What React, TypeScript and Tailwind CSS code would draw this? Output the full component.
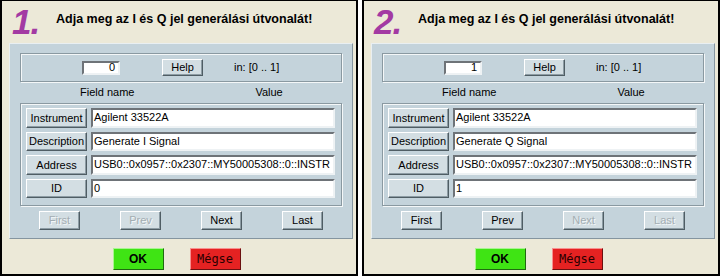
import React from "react";

interface PanelProps {
  num: string;
  index: string;
  desc: string;
  atFirst: boolean;
}

const fields = ["Instrument", "Description", "Address", "ID"];

const raised =
  "border border-t-white border-l-white border-b-[#4f5d64] border-r-[#4f5d64] shadow-[inset_-1px_-1px_0_#8d9ca4]";
const sunken =
  "border-2 border-t-[#6e7378] border-l-[#6e7378] border-b-[#eef2f4] border-r-[#eef2f4] bg-white";
const etched = "border border-[#8a99a1] shadow-[1px_1px_0_#f4f7f8,inset_1px_1px_0_#f4f7f8]";

const NavButton: React.FC<{ label: string; disabled: boolean }> = ({ label, disabled }) => (
  <div
    className={`w-[41px] h-[19px] flex items-center justify-center bg-[#d3dee3] ${raised} ${
      disabled ? "text-[#a3adb2] [text-shadow:1px_1px_0_#f4f7f8]" : "text-black"
    }`}
  >
    {label}
  </div>
);

const Panel: React.FC<PanelProps> = ({ num, index, desc, atFirst }) => {
  const values = ["Agilent 33522A", desc, "USB0::0x0957::0x2307::MY50005308::0::INSTR", index];

  return (
    <div className="w-[358px] h-[276px] bg-[#ece9d8] border-2 border-t border-black flex flex-col">
      {/* fejléc */}
      <div className="h-[42px] flex items-start pl-[10px]">
        <span className="text-[35px] leading-[36px] font-bold italic text-[#a33aa3] mt-[3px] w-[43px] tracking-[-1px]">
          {num}
        </span>
        <span className="text-[12.5px] font-bold text-black mt-[9px] ml-[1px]">
          Adja meg az I és Q jel generálási útvonalát!
        </span>
      </div>

      {/* kék panel */}
      <div className="ml-[7px] mr-[3px] h-[196px] bg-[#c4d3db] border border-t-[#e9eff2] border-l-[#e9eff2] border-b-[#8595a0] border-r-[#8595a0] flex flex-col px-[10px] pt-[9px]">
        <div className={`h-[29px] flex items-center ${etched}`}>
          <div className={`ml-[61px] w-[38px] h-[14px] ${sunken} flex items-center justify-end pr-[3px] leading-none`}>
            {index}
          </div>
          <div className={`ml-[42px] w-[41px] h-[17px] flex items-center justify-center bg-[#d3dee3] ${raised}`}>
            Help
          </div>
          <span className="ml-[31px]">in: [0 .. 1]</span>
        </div>

        <div className="h-[21px] flex items-center">
          <span className="ml-[60px]">Field name</span>
          <span className="ml-[121px]">Value</span>
        </div>

        <div className={`h-[103px] flex flex-col gap-[4px] pl-[5px] pr-[6px] pt-[4px] ${etched}`}>
          {fields.map((f, i) => (
            <div key={f} className="flex gap-[4px] h-[19.5px]">
              <div className={`w-[61px] h-full flex items-center justify-center bg-[#d3dee3] ${raised}`}>{f}</div>
              <div className={`flex-1 h-full ${sunken} flex items-center pl-[1px] leading-none`}>{values[i]}</div>
            </div>
          ))}
        </div>

        <div className="flex pl-[19px] gap-[40px] mt-[5px]">
          <NavButton label="First" disabled={atFirst} />
          <NavButton label="Prev" disabled={atFirst} />
          <NavButton label="Next" disabled={!atFirst} />
          <NavButton label="Last" disabled={!atFirst} />
        </div>
      </div>

      {/* OK / Mégse */}
      <div className="flex justify-center gap-[26px] mt-[9px] pr-[5px]">
        <div className="w-[51px] h-[22px] bg-[#3fe414] border border-t-[#a8f590] border-l-[#a8f590] border-b-[#1f6a10] border-r-[#1f6a10] flex items-center justify-center font-bold text-[12px]">
          OK
        </div>
        <div className="w-[51px] h-[22px] bg-[#e52222] border border-t-[#f79090] border-l-[#f79090] border-b-[#6a1010] border-r-[#6a1010] flex items-center justify-center text-[12px] text-[#2a0000] [font-family:'DejaVu_Sans_Mono',monospace]">
          Mégse
        </div>
      </div>
    </div>
  );
};

export default function App() {
  return (
    <div className="w-[722px] h-[278px] bg-white flex gap-[4px] text-[11px] text-black [font-family:'Liberation_Sans',Arial,sans-serif]">
      <Panel num="1." index="0" desc="Generate I Signal" atFirst={true} />
      <Panel num="2." index="1" desc="Generate Q Signal" atFirst={false} />
    </div>
  );
}
